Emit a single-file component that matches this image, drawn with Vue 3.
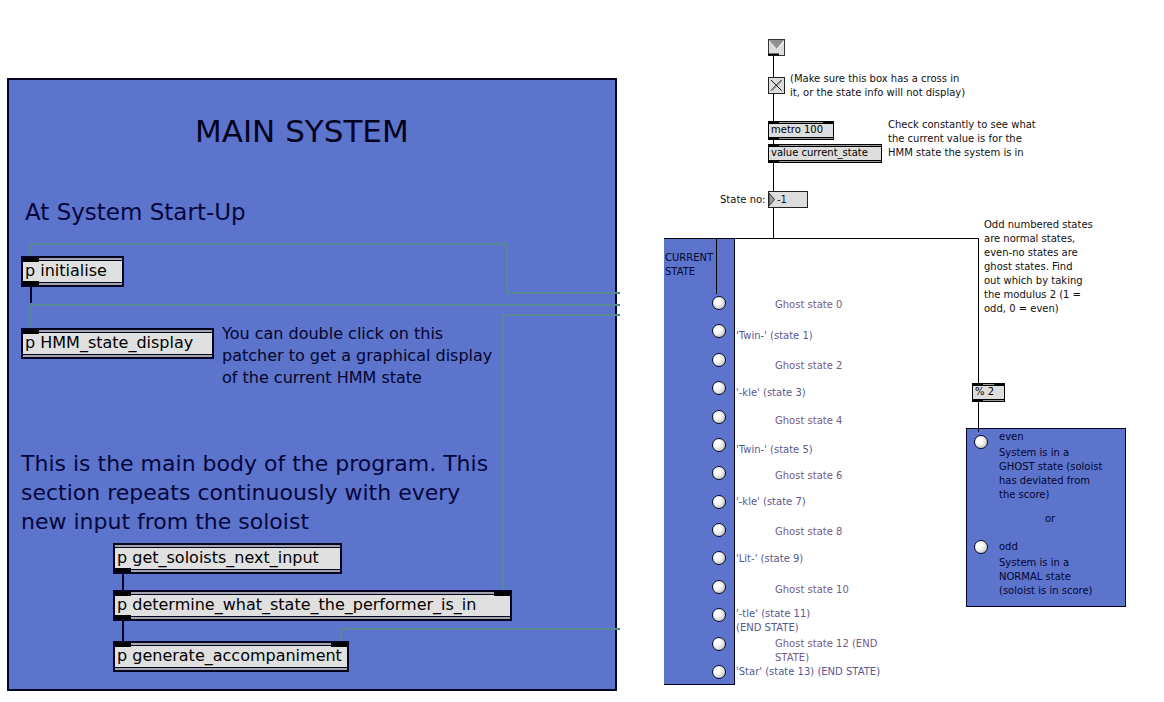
<script setup>
import { ref } from 'vue'

const at = (item) => ({ left: item.x + 'px', top: item.y + 'px' })
const box = (item) => ({ left: item.x + 'px', top: item.y + 'px', width: item.w + 'px' })

const crossed = ref(true)
const stateNo = ref('-1')

const systemObjects = [
  { x: 21, y: 256, w: 103, text: 'p initialise', ports: ['in-left', 'out-left'] },
  { x: 21, y: 328, w: 193, text: 'p HMM_state_display', ports: ['in-left'] },
  { x: 113, y: 543, w: 229, text: 'p get_soloists_next_input', ports: ['out-left'] },
  { x: 113, y: 590, w: 399, text: 'p determine_what_state_the_performer_is_in', ports: ['in-left', 'in-right', 'out-left'] },
  { x: 113, y: 641, w: 236, text: 'p generate_accompaniment', ports: ['in-left', 'in-right'] }
]

const displayObjects = [
  { x: 768, y: 121, w: 66, text: 'metro 100', ports: ['in-left', 'in-right', 'out-left'] },
  { x: 768, y: 144, w: 114, text: 'value current_state', ports: ['in-left', 'out-left'] },
  { x: 972, y: 383, w: 33, text: '% 2', ports: ['in-left', 'in-right', 'out-left'] }
]

const comments = [
  { x: 790, y: 72, text: '(Make sure this box has a cross in\nit, or the state info will not display)' },
  { x: 888, y: 118, text: 'Check constantly to see what\nthe current value is for the\nHMM state the system is in' },
  { x: 984, y: 218, text: 'Odd numbered states\nare normal states,\neven-no states are\nghost states. Find\nout which by taking\nthe modulus 2 (1 =\nodd, 0 = even)' }
]

const states = [
  { x: 775, y: 298, text: 'Ghost state 0' },
  { x: 736, y: 329, text: "'Twin-' (state 1)" },
  { x: 775, y: 359, text: 'Ghost state 2' },
  { x: 736, y: 386, text: "'-kle' (state 3)" },
  { x: 775, y: 414, text: 'Ghost state 4' },
  { x: 736, y: 443, text: "'Twin-' (state 5)" },
  { x: 775, y: 469, text: 'Ghost state 6' },
  { x: 736, y: 495, text: "'-kle' (state 7)" },
  { x: 775, y: 525, text: 'Ghost state 8' },
  { x: 736, y: 552, text: "'Lit-' (state 9)" },
  { x: 775, y: 583, text: 'Ghost state 10' },
  { x: 736, y: 607, text: "'-tle' (state 11)\n(END STATE)" },
  { x: 775, y: 637, text: 'Ghost state 12 (END\nSTATE)' },
  { x: 736, y: 665, text: "'Star' (state 13) (END STATE)" }
]
</script>

<template>
  <main class="canvas">
    <section class="system-panel" aria-label="Main system"></section>

    <section class="state-panel">
      <h2 class="state-title">CURRENT<br>STATE</h2>
      <div class="bangs">
        <button v-for="(s, i) in states" :key="i" class="bang" type="button" :aria-label="'State ' + i"></button>
      </div>
    </section>

    <section class="parity-panel">
      <div class="parity">
        <button class="bang" type="button" aria-label="even"></button>
        <div>
          <p>even</p>
          <p class="detail">System is in a<br>GHOST state (soloist<br>has deviated from<br>the score)</p>
        </div>
      </div>
      <p class="or">or</p>
      <div class="parity">
        <button class="bang" type="button" aria-label="odd"></button>
        <div>
          <p>odd</p>
          <p class="detail">System is in a<br>NORMAL state<br>(soloist is in score)</p>
        </div>
      </div>
    </section>

    <svg class="wires" width="1164" height="702" aria-hidden="true">
      <g fill="none" stroke="#568898" stroke-width="2">
        <path d="M30 257V244H507V293H620" />
        <path d="M30 329V305H620" />
        <path d="M503 591V315H620" />
        <path d="M341 642V629H620" />
      </g>
      <g fill="none" stroke="#02022c" stroke-width="2">
        <path d="M31 286V303M123 573V591M123 620V642" />
      </g>
      <g fill="none" stroke="#000" stroke-width="1">
        <path d="M773.5 55V238M664 238.5H978.5V432M716.5 238V294" />
      </g>
    </svg>

    <h1 class="title">MAIN SYSTEM</h1>
    <h2 class="heading">At System Start-Up</h2>
    <p class="hint">You can double click on this<br>patcher to get a graphical display<br>of the current HMM state</p>
    <p class="body-note">This is the main body of the program. This<br>section repeats continuously with every<br>new input from the soloist</p>

    <button v-for="o in systemObjects" :key="o.text" type="button" class="object large" :style="box(o)">
      {{ o.text }}
      <span v-for="p in o.ports" :key="p" class="port" :class="p"></span>
    </button>

    <button type="button" class="inlet" aria-label="Inlet">
      <svg width="17" height="17" viewBox="0 0 17 17">
        <rect x=".5" y=".5" width="16" height="16" fill="#ddd" stroke="#333" />
        <path d="M1 1H16L9 10Z" fill="#909090" />
        <path d="M9 10L16 2" fill="none" stroke="#fff" />
        <path d="M0 15.500H11" stroke="#000" stroke-width="2" />
      </svg>
    </button>

    <label class="toggle">
      <input v-model="crossed" type="checkbox" aria-label="Display state info">
      <svg v-if="crossed" width="17" height="17" viewBox="0 0 17 17">
        <path d="M4 4L14 14M4 14L14 4" stroke="#aaa" />
        <path d="M3 3L13.500 13.500M3 13.500L13.500 3" stroke="#111" />
      </svg>
    </label>

    <button v-for="o in displayObjects" :key="o.text" type="button" class="object small" :style="box(o)">
      {{ o.text }}
      <span v-for="p in o.ports" :key="p" class="port" :class="p"></span>
    </button>

    <div class="number">
      <label for="state-no">State no:</label>
      <span class="number-box">
        <svg width="6" height="15" viewBox="0 0 6 15" aria-hidden="true">
          <path d="M0 1L5.500 7.500L0 14Z" fill="#999" stroke="#333" />
        </svg>
        <input id="state-no" v-model="stateNo" type="text">
      </span>
    </div>

    <p v-for="c in comments" :key="c.text" class="comment" :style="at(c)">{{ c.text }}</p>
    <p v-for="(s, i) in states" :key="s.text" class="comment" :class="i % 2 ? 'normal' : 'ghost'" :style="at(s)">{{ s.text }}</p>
  </main>
</template>

<style>
body {
  margin: 0;
  background: #fff;
}
</style>

<style scoped>
.canvas {
  position: relative;
  width: 100%;
  min-height: 100vh;
  overflow: hidden;
  font: 10px/14px "DejaVu Sans", sans-serif;
  color: #111;
}
h1, h2, p {
  margin: 0;
  font-weight: 400;
}
button, input {
  font: inherit;
  color: inherit;
  padding: 0;
  margin: 0;
}
.system-panel {
  position: absolute;
  left: 7px;
  top: 78px;
  width: 610px;
  height: 613px;
  box-sizing: border-box;
  background: #5c74cc;
  border: 2px solid #05051e;
}
.wires {
  position: absolute;
  left: 0;
  top: 0;
  pointer-events: none;
}
.title, .heading, .hint, .body-note, .comment {
  position: absolute;
  white-space: pre;
}
.title {
  left: 195px;
  top: 111px;
  font-size: 31px;
  line-height: 40px;
  color: #03031c;
}
.heading {
  left: 25px;
  top: 198px;
  font-size: 23px;
  line-height: 28px;
  color: #06063c;
}
.hint {
  left: 222px;
  top: 323px;
  font-size: 16px;
  line-height: 22px;
  color: #04042c;
}
.body-note {
  left: 21px;
  top: 449px;
  font-size: 22px;
  line-height: 29px;
  color: #06063c;
}
.object {
  position: absolute;
  box-sizing: border-box;
  border-radius: 0;
  text-align: left;
  white-space: nowrap;
  color: #000;
}
.large {
  height: 31px;
  padding: 0 0 2px 2px;
  border: 2px solid #05051e;
  font-size: 16px;
  background: linear-gradient(#a4a4b0 2px, #05051e 2px 3px, #e0e0e0 3px 24px, #05051e 24px 25px, #a4a4b0 25px);
}
.small {
  height: 19px;
  padding: 0 0 1px 2px;
  border: 1px solid #000;
  background: linear-gradient(#999 1px, #000 1px 2px, #ddd 2px 15px, #000 15px 16px, #999 16px);
}
.port {
  position: absolute;
  background: #000;
}
.large .port {
  width: 16px;
  height: 4px;
}
.small .port {
  width: 10px;
  height: 2px;
}
.in-left { left: 0; top: 0; }
.in-right { right: 0; top: 0; }
.out-left { left: 0; bottom: 0; }
.inlet {
  position: absolute;
  left: 768px;
  top: 39px;
  border: 0;
  background: none;
}
.inlet svg {
  display: block;
}
.toggle {
  position: absolute;
  left: 768px;
  top: 77px;
  display: grid;
}
.toggle input {
  appearance: none;
  width: 17px;
  height: 17px;
  box-sizing: border-box;
  border: 1px solid #222;
  background: #ddd;
}
.toggle input, .toggle svg {
  grid-area: 1 / 1;
}
.toggle svg {
  pointer-events: none;
}
.number {
  position: absolute;
  left: 720px;
  top: 191px;
  display: flex;
  align-items: center;
}
.number label {
  width: 48px;
  white-space: nowrap;
}
.number-box {
  display: flex;
  box-sizing: border-box;
  width: 40px;
  height: 17px;
  border: 1px solid #222;
  background: #ddd;
}
.number input {
  width: 28px;
  border: 0;
  padding-left: 2px;
  background: none;
}
.state-panel {
  position: absolute;
  left: 664px;
  top: 238px;
  width: 71px;
  height: 447px;
  box-sizing: border-box;
  display: flex;
  flex-direction: column;
  padding: 13px 8px 5px 1px;
  background: #5c74cc;
  border: solid #05051e;
  border-width: 0 1px 1px 0;
}
.state-title {
  font-size: 10px;
  line-height: 14px;
  color: #05052c;
}
.bangs {
  flex: 1;
  display: flex;
  flex-direction: column;
  justify-content: space-between;
  align-items: flex-end;
  padding-top: 17px;
}
.bang {
  width: 14px;
  height: 14px;
  border: 1px solid #0a0a28;
  border-radius: 50%;
  background: radial-gradient(circle at 35% 35%, #fff 25%, #dcdcd8 60%, #a8a8a0);
}
.parity-panel {
  position: absolute;
  left: 966px;
  top: 428px;
  width: 160px;
  box-sizing: border-box;
  padding: 1px 7px 8px;
  background: #5c74cc;
  border: 1px solid #05051e;
  color: #05052c;
}
.parity {
  display: flex;
  gap: 11px;
  white-space: nowrap;
}
.parity .bang {
  margin-top: 5px;
}
.or + .parity .bang {
  margin-top: 0;
}
.detail {
  margin-top: 2px;
}
.or {
  padding: 10px 0 14px 71px;
}
.ghost {
  color: #785a84;
}
.normal {
  color: #585890;
}
</style>
